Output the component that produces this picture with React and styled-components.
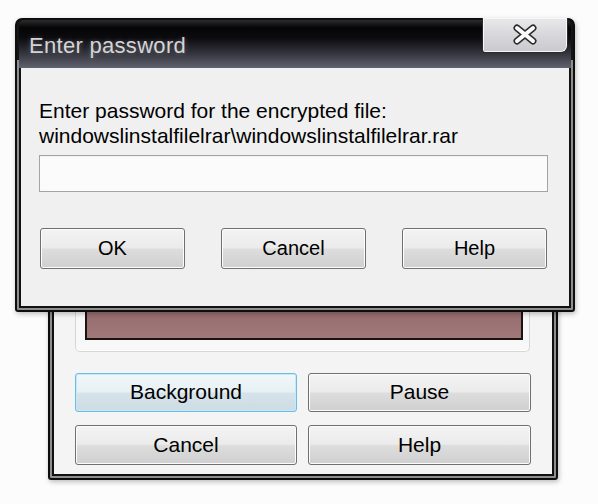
import React from "react"
import styled, { createGlobalStyle } from "styled-components"

const Global = createGlobalStyle`
  html, body {
    margin: 0;
    padding: 0;
    background: #fcfcfc;
  }
  * {
    box-sizing: border-box;
  }
`

const Desktop = styled.div`
  position: relative;
  width: 598px;
  height: 504px;
  overflow: hidden;
  background: #fcfcfc;
  font-family: "Liberation Sans", Arial, sans-serif;
  color: #000;
`

/* both windows sit on the desktop at their own place */
const Window = styled.div`
  position: absolute;
  left: ${p => p.$x}px;
  top: ${p => p.$y}px;
  width: ${p => p.$w}px;
  height: ${p => p.$h}px;
  display: flex;
  flex-direction: column;
  border: 2px solid #0e0e0e;
  border-radius: 7px 7px 3px 3px;
  padding: 0 2px 2px;
  background: linear-gradient(#151515 0 40px, #8e8e8e 40px);
  box-shadow: 1px 2px 5px rgba(0, 0, 0, 0.25);
`

const TitleBar = styled.div`
  flex-shrink: 0;
  height: ${p => p.$h}px;
  display: flex;
  justify-content: space-between;
  align-items: flex-start;
  padding-left: 10px;
  border-radius: 5px 5px 0 0;
  background: linear-gradient(
    #2c2c2e 0%,
    #050506 16%,
    #0c0c10 38%,
    #34353e 70%,
    #60626e 100%
  );
`

const TitleText = styled.div`
  margin-top: 13px;
  font-size: 22px;
  line-height: 26px;
  color: #d4d4d6;
  letter-spacing: 0.3px;
  text-shadow: 0 0 5px rgba(255, 255, 255, 0.25);
`

const CloseButton = styled.div`
  width: 86px;
  height: 35px;
  margin-top: -2px;
  margin-right: 3px;
  display: flex;
  align-items: center;
  justify-content: center;
  border: 1px solid #2a2a2a;
  border-top: none;
  border-radius: 0 0 7px 3px;
  background: linear-gradient(#e9e9ec, #d6d6da 55%, #cacace);
  box-shadow: inset 0 0 0 1px #f7f7f7;
`

const Client = styled.div`
  flex: 1;
  display: flex;
  flex-direction: column;
  border: 2px solid #111;
  border-top: none;
  background: ${p => p.$bg || "#f0f0f0"};
  padding: ${p => p.$pad};
  justify-content: ${p => (p.$bottom ? "flex-end" : "flex-start")};
`

const Prompt = styled.div`
  font-size: 21px;
  line-height: 25px;
  white-space: nowrap;
`

const PasswordInput = styled.div`
  margin-top: 7px;
  width: 509px;
  height: 37px;
  border: 1px solid #a4a4a4;
  background: #fbfbfb;
  box-shadow: inset 0 1px 1px rgba(0, 0, 0, 0.05);
`

const ButtonRow = styled.div`
  display: flex;
  gap: 36px;
  margin-top: 36px;
  margin-left: 1px;
`

const Button = styled.div`
  width: ${p => (p.$w ? `${p.$w}px` : "auto")};
  height: ${p => p.$h}px;
  display: flex;
  align-items: center;
  justify-content: center;
  font-size: ${p => p.$size}px;
  border: 1px solid ${p => (p.$focus ? "#6cbde3" : "#707070")};
  border-radius: 3px;
  background: ${p =>
    p.$focus
      ? "linear-gradient(#f1f7fa, #e7f0f4 48%, #d7e3ea 52%, #cddbe3)"
      : "linear-gradient(#f3f3f3, #ebebeb 48%, #dddddd 52%, #cfcfcf)"};
  box-shadow: inset 0 0 0 1px ${p => (p.$focus ? "#c4eafa" : "#fcfcfc")};
  padding-bottom: 1px;
`

const Groove = styled.div`
  width: 455px;
  height: 44px;
  margin-bottom: 21px;
  display: flex;
  padding: 0 6px 11px 9px;
  border: 1px solid #d6d6d6;
  border-top: none;
  border-radius: 0 0 5px 5px;
  background: #f8f8f8;
  box-shadow: inset 0 -1px 0 #ffffff;
`

const Bar = styled.div`
  flex: 1;
  border: 2px solid #1b1212;
  border-top: none;
  background: linear-gradient(#946a6b, #9c7374 60%, #a07a7b);
`

const ButtonGrid = styled.div`
  display: grid;
  grid-template-columns: 222px 223px;
  grid-template-rows: 39px 40px;
  column-gap: 11px;
  row-gap: 13px;
`

const CloseGlyph = () => (
  <svg width="30" height="24" viewBox="0 0 30 24">
    <g strokeLinecap="round" fill="none">
      <path d="M7 5 L23 18 M23 5 L7 18" stroke="#2b2b2b" strokeWidth="7" />
      <path d="M7 5 L23 18 M23 5 L7 18" stroke="#fafafa" strokeWidth="4" />
    </g>
  </svg>
)

export default function App() {
  return (
    <>
      <Global />
      <Desktop>
        <Window $x={48} $y={130} $w={510} $h={350}>
          <TitleBar $h={40} />
          <Client $bg="#f4f4f4" $pad="0 21px 9px" $bottom>
            <Groove>
              <Bar />
            </Groove>
            <ButtonGrid>
              <Button $h={39} $size={21} $focus>Background</Button>
              <Button $h={39} $size={21}>Pause</Button>
              <Button $h={40} $size={21}>Cancel</Button>
              <Button $h={40} $size={21}>Help</Button>
            </ButtonGrid>
          </Client>
        </Window>

        <Window $x={15} $y={18} $w={560} $h={294}>
          <TitleBar $h={48}>
            <TitleText>Enter password</TitleText>
            <CloseButton>
              <CloseGlyph />
            </CloseButton>
          </TitleBar>
          <Client $pad="30px 18px 0">
            <Prompt>
              Enter password for the encrypted file:
              <br />
              windowslinstalfilelrar\windowslinstalfilelrar.rar
            </Prompt>
            <PasswordInput />
            <ButtonRow>
              <Button $w={145} $h={41} $size={20}>OK</Button>
              <Button $w={145} $h={41} $size={20}>Cancel</Button>
              <Button $w={145} $h={41} $size={20}>Help</Button>
            </ButtonRow>
          </Client>
        </Window>
      </Desktop>
    </>
  )
}
